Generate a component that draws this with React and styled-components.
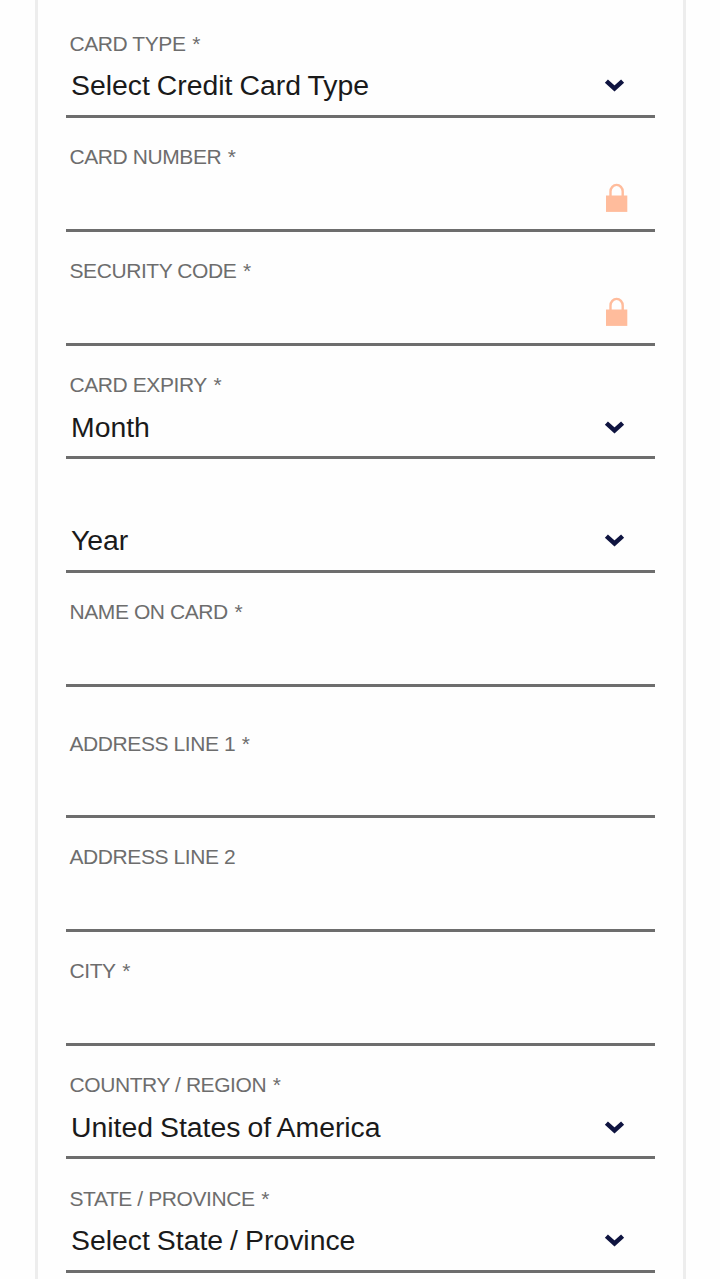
import React from "react";
import styled, { createGlobalStyle } from "styled-components";

const GlobalStyle = createGlobalStyle`
  *, *::before, *::after {
    box-sizing: border-box;
  }

  body {
    margin: 0;
    background: #fefefe;
    font-family: "Liberation Sans", Arial, Helvetica, sans-serif;
    overflow: hidden;
  }
`;

const Panel = styled.form`
  width: 651px;
  height: 1279px;
  margin-left: 35px;
  padding: 4.25px 28px 0;
  border: 3px solid #ededed;
  border-width: 0 3px;
  overflow: hidden;
`;

const Group = styled.div`
  & + & {
    margin-top: 17.5px;
  }
`;

const Field = styled.div`
  display: flex;
  flex-direction: column;
  height: 113.75px;
  padding-top: 27.25px;
`;

const Label = styled.label`
  height: 24px;
  padding-left: 3.5px;
  color: #6d6d6d;
  font-size: 21px;
  line-height: 24px;
  letter-spacing: -0.42px;
  white-space: pre;
`;

const Required = styled.span`
  margin-left: 1.2px;
`;

const Control = styled.div`
  flex: 1;
  display: flex;
  align-items: center;
  padding-right: 27px;
  border-bottom: 3px solid #6d6d6d;

  input,
  select {
    flex: 1;
    min-width: 0;
    height: 100%;
    margin: 0;
    padding: 0 0 0 5px;
    border: 0;
    outline: 0;
    appearance: none;
    background: transparent;
    color: #1a1a1a;
    font-family: inherit;
    font-size: 28.4px;
    letter-spacing: -0.02px;
    word-spacing: -0.8px;
  }

  svg {
    flex: none;
    display: block;
  }
`;

function Chevron() {
  return (
    <svg width="24" height="32" viewBox="0 0 24 32">
      <path d="M2.4 12.1 L10.5 19.5 L18.6 12.1" fill="none" stroke="#0f1440" strokeWidth="4.5" />
    </svg>
  );
}

function Lock() {
  return (
    <svg width="24" height="32" viewBox="0 0 24 32">
      <path d="M6.5 14 V8.5 A6.1 6.6 0 0 1 18.7 8.5 V14" fill="none" stroke="#ffbc9c" strokeWidth="2.4" />
      <rect x="2" y="12.5" width="21.3" height="16.4" fill="#ffbc9c" />
    </svg>
  );
}

function FieldLabel({ id, text, required }) {
  return (
    <Label htmlFor={id}>
      {text}
      {required && <Required> *</Required>}
    </Label>
  );
}

function SelectField({ id, label, value, required }) {
  return (
    <Field>
      <FieldLabel id={id} text={label} required={required} />
      <Control>
        <select id={id}>
          <option>{value}</option>
        </select>
        <Chevron />
      </Control>
    </Field>
  );
}

function InputField({ id, label, required, secure }) {
  return (
    <Field>
      <FieldLabel id={id} text={label} required={required} />
      <Control>
        <input id={id} type="text" />
        {secure && <Lock />}
      </Control>
    </Field>
  );
}

export default function App() {
  return (
    <>
      <GlobalStyle />
      <Panel>
        <Group>
          <SelectField id="cardType" label="CARD TYPE" value="Select Credit Card Type" required />
          <InputField id="cardNumber" label="CARD NUMBER" required secure />
          <InputField id="securityCode" label="SECURITY CODE" required secure />
          <SelectField id="expiryMonth" label="CARD EXPIRY" value="Month" required />
          <SelectField id="expiryYear" label="" value="Year" />
          <InputField id="cardName" label="NAME ON CARD" required />
        </Group>
        <Group>
          <InputField id="address1" label="ADDRESS LINE 1" required />
          <InputField id="address2" label="ADDRESS LINE 2" />
          <InputField id="city" label="CITY" required />
          <SelectField id="country" label="COUNTRY / REGION" value="United States of America" required />
          <SelectField id="state" label="STATE / PROVINCE" value="Select State / Province" required />
        </Group>
      </Panel>
    </>
  );
}
